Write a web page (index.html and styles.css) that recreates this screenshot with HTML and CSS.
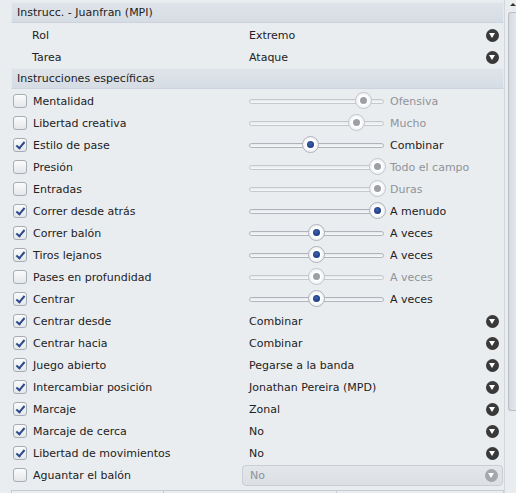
FILE: index.html
```html
<!DOCTYPE html>
<html>
<head>
<meta charset="utf-8">
<link rel="stylesheet" href="styles.css">
</head>
<body>
<div class="window">
  <div class="main">
    <div class="header">Instrucc. - Juanfran (MPI)</div>
    <div class="row">
      <div class="label plain">Rol</div>
      <div class="value combo"><span>Extremo</span><span class="arrow"></span></div>
    </div>
    <div class="row">
      <div class="label plain">Tarea</div>
      <div class="value combo"><span>Ataque</span><span class="arrow"></span></div>
    </div>
    <div class="header second">Instrucciones específicas</div>

    <div class="row">
      <div class="label"><span class="cb"></span>Mentalidad</div>
      <div class="value slider off"><span class="track"><span class="knob" style="left:114px"></span></span><span class="stext">Ofensiva</span></div>
    </div>
    <div class="row">
      <div class="label"><span class="cb"></span>Libertad creativa</div>
      <div class="value slider off"><span class="track"><span class="knob" style="left:107px"></span></span><span class="stext">Mucho</span></div>
    </div>
    <div class="row">
      <div class="label"><span class="cb on"></span>Estilo de pase</div>
      <div class="value slider"><span class="track"><span class="knob" style="left:61px"></span></span><span class="stext">Combinar</span></div>
    </div>
    <div class="row">
      <div class="label"><span class="cb"></span>Presión</div>
      <div class="value slider off"><span class="track"><span class="knob" style="left:128px"></span></span><span class="stext">Todo el campo</span></div>
    </div>
    <div class="row">
      <div class="label"><span class="cb"></span>Entradas</div>
      <div class="value slider off"><span class="track"><span class="knob" style="left:128px"></span></span><span class="stext">Duras</span></div>
    </div>
    <div class="row">
      <div class="label"><span class="cb on"></span>Correr desde atrás</div>
      <div class="value slider"><span class="track"><span class="knob" style="left:128px"></span></span><span class="stext">A menudo</span></div>
    </div>
    <div class="row">
      <div class="label"><span class="cb on"></span>Correr balón</div>
      <div class="value slider"><span class="track"><span class="knob" style="left:67px"></span></span><span class="stext">A veces</span></div>
    </div>
    <div class="row">
      <div class="label"><span class="cb on"></span>Tiros lejanos</div>
      <div class="value slider"><span class="track"><span class="knob" style="left:67px"></span></span><span class="stext">A veces</span></div>
    </div>
    <div class="row">
      <div class="label"><span class="cb"></span>Pases en profundidad</div>
      <div class="value slider off"><span class="track"><span class="knob" style="left:67px"></span></span><span class="stext">A veces</span></div>
    </div>
    <div class="row">
      <div class="label"><span class="cb on"></span>Centrar</div>
      <div class="value slider"><span class="track"><span class="knob" style="left:67px"></span></span><span class="stext">A veces</span></div>
    </div>

    <div class="row">
      <div class="label"><span class="cb on"></span>Centrar desde</div>
      <div class="value combo"><span>Combinar</span><span class="arrow"></span></div>
    </div>
    <div class="row">
      <div class="label"><span class="cb on"></span>Centrar hacia</div>
      <div class="value combo"><span>Combinar</span><span class="arrow"></span></div>
    </div>
    <div class="row">
      <div class="label"><span class="cb on"></span>Juego abierto</div>
      <div class="value combo"><span>Pegarse a la banda</span><span class="arrow"></span></div>
    </div>
    <div class="row">
      <div class="label"><span class="cb on"></span>Intercambiar posición</div>
      <div class="value combo"><span>Jonathan Pereira (MPD)</span><span class="arrow"></span></div>
    </div>
    <div class="row">
      <div class="label"><span class="cb on"></span>Marcaje</div>
      <div class="value combo"><span>Zonal</span><span class="arrow"></span></div>
    </div>
    <div class="row">
      <div class="label"><span class="cb on"></span>Marcaje de cerca</div>
      <div class="value combo"><span>No</span><span class="arrow"></span></div>
    </div>
    <div class="row">
      <div class="label"><span class="cb on"></span>Libertad de movimientos</div>
      <div class="value combo"><span>No</span><span class="arrow"></span></div>
    </div>
    <div class="row">
      <div class="label"><span class="cb"></span>Aguantar el balón</div>
      <div class="value combo disabled"><span>No</span><span class="arrow"></span></div>
    </div>

    <div class="bottom">
      <div class="bcell c1"></div>
      <div class="bcell c2"></div>
      <div class="bcell c3"></div>
    </div>
  </div>
  <div class="scroll">
    <div class="uparrow"></div>
    <div class="thumb"></div>
  </div>
</div>
</body>
</html>
```

FILE: styles.css
```css
html, body {
  margin: 0;
  padding: 0;
  width: 516px;
  height: 493px;
  overflow: hidden;
  background: #eaedf0;
  font-family: "DejaVu Sans", sans-serif;
  font-size: 11px;
  color: #222;
}

.window {
  display: flex;
  height: 493px;
}

.main {
  width: 495px;
  padding: 2px 0 0 11px;
  border-right: 1px solid #d3d7dc;
}

.header {
  height: 19px;
  line-height: 19px;
  margin-bottom: 1px;
  padding-left: 5px;
  background: linear-gradient(#dfe4ea, #d6dce4);
  border: 1px solid #e6eaef;
  border-bottom-color: #ccd3dc;
  color: #222;
}

.header.second {
  margin-top: 0;
}

.row {
  display: grid;
  grid-template-columns: 238px 1fr;
  height: 22px;
  align-items: center;
}

.label {
  display: flex;
  align-items: center;
  padding-left: 2px;
}

.label.plain {
  padding-left: 21px;
}

.cb {
  width: 12px;
  height: 12px;
  border: 1px solid #a7adb5;
  border-radius: 3px;
  background: linear-gradient(#fbfbfc, #e4e7ea);
  margin-right: 6px;
  position: relative;
  flex: none;
}

.cb.on::after {
  content: "";
  position: absolute;
  left: 4px;
  top: 1px;
  width: 3px;
  height: 7px;
  border-right: 2px solid #2b4a8c;
  border-bottom: 2px solid #2b4a8c;
  transform: rotate(40deg);
}

.combo {
  display: flex;
  justify-content: space-between;
  align-items: center;
  padding-right: 5px;
  height: 22px;
}

.arrow {
  width: 13px;
  height: 13px;
  border-radius: 50%;
  background: radial-gradient(circle at 50% 45%, #3a3a3a 55%, #262626 100%);
  position: relative;
  flex: none;
}

.arrow::after {
  content: "";
  position: absolute;
  left: 3px;
  top: 4px;
  border-left: 3.5px solid transparent;
  border-right: 3.5px solid transparent;
  border-top: 5px solid #fff;
}

.combo.disabled {
  margin-left: -7px;
  padding-left: 7px;
  padding-right: 4px;
  height: 19px;
  border: 1px solid #c9ced4;
  border-radius: 4px;
  background: linear-gradient(#e3e6ea, #dcdfe3);
  color: #8e939a;
  margin-right: 1px;
}

.combo.disabled .arrow {
  background: #a4a7ab;
}

.slider {
  display: flex;
  align-items: center;
}

.track {
  position: relative;
  width: 133px;
  height: 3px;
  border: 1px solid #afb4ba;
  border-radius: 3px;
  background: linear-gradient(#e6e8eb, #f7f8f9);
  margin-right: 6px;
  flex: none;
}

.knob {
  position: absolute;
  top: -8px;
  width: 17px;
  height: 17px;
  margin-left: -9px;
  border-radius: 50%;
  box-sizing: border-box;
  border: 1px solid #aeb3ba;
  background: radial-gradient(circle, #ffffff 40%, #dfe2e6 100%);
}

.knob::after {
  content: "";
  position: absolute;
  left: 4px;
  top: 4px;
  width: 7px;
  height: 7px;
  border-radius: 50%;
  background: radial-gradient(circle at 45% 40%, #3f63b0, #1d3a7f 70%);
}

.slider.off .track {
  border-color: #c4c8cd;
}

.slider.off .knob {
  border-color: #c2c6cb;
}

.slider.off .knob::after {
  background: #9c9fa3;
}

.slider.off .stext {
  color: #8e939a;
}

.bottom {
  display: flex;
  margin-top: 4px;
  height: 10px;
  border-top: 1px solid #c5ccd6;
  border-left: 1px solid #c5ccd6;
}

.bcell {
  border-right: 1px solid #c5ccd6;
}

.c1 { width: 151px; }
.c2 { width: 172px; }
.c3 { flex: 1; }

.scroll {
  position: relative;
  flex: 1;
}

.uparrow {
  margin: 3px 0 0 5px;
  width: 0;
  height: 0;
  border-left: 3px solid transparent;
  border-right: 3px solid transparent;
  border-bottom: 3px solid #333;
}

.thumb {
  margin: 6px 0 0 3px;
  height: 397px;
  border: 1px solid #b9bfc6;
  border-right: none;
  border-radius: 3px 0 0 3px;
  background: linear-gradient(90deg, #d7dbe0, #e3e6ea);
}
```
